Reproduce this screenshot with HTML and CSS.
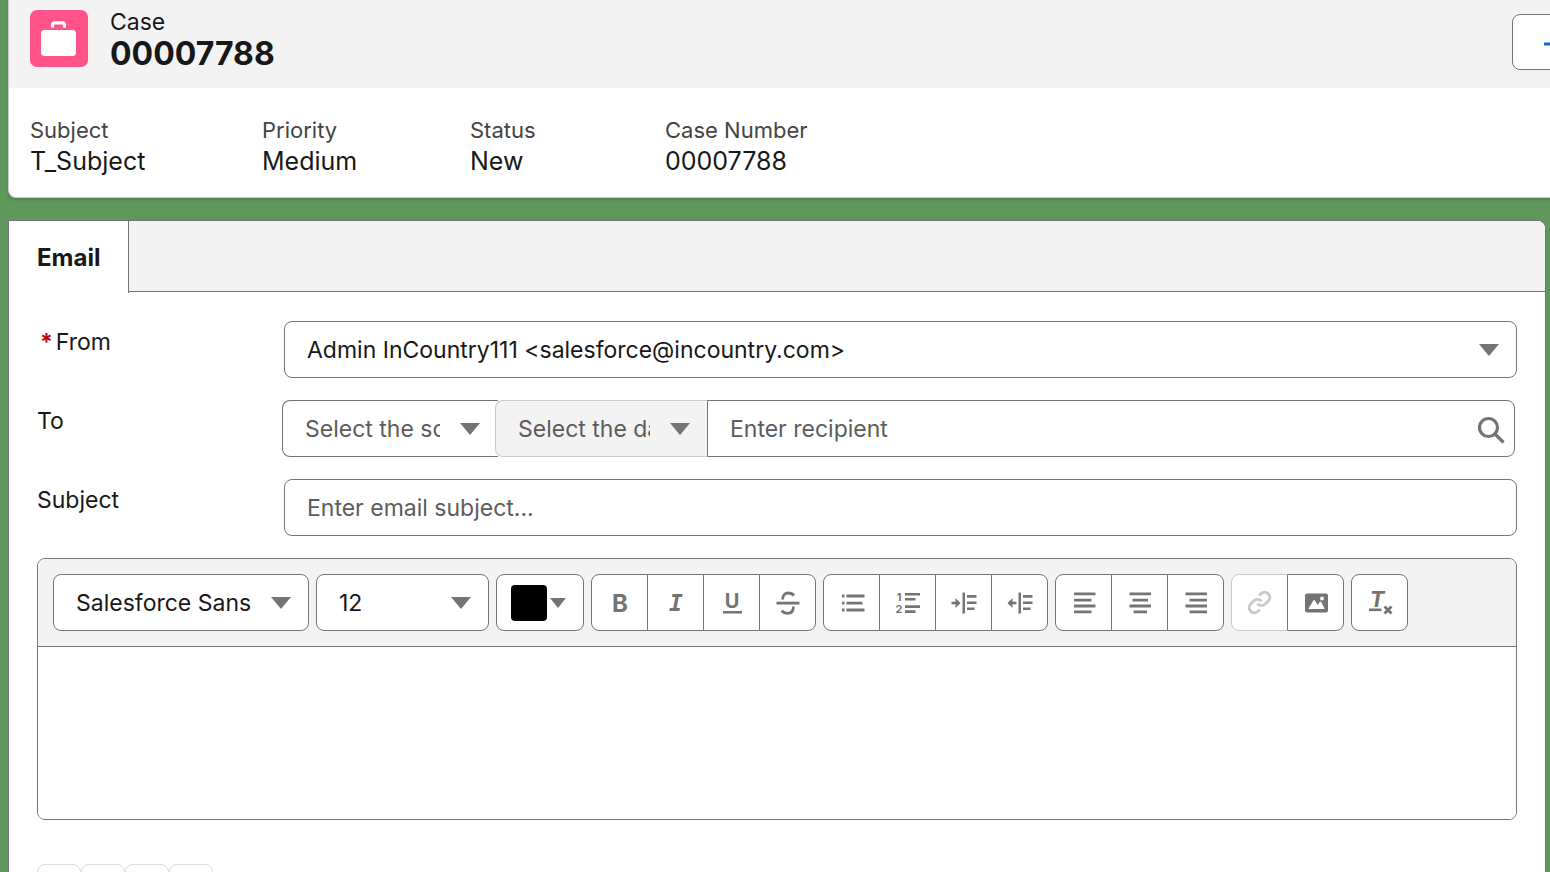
FILE: index.html
```html
<!doctype html>
<html lang="en">
  <head>
    <meta charset="UTF-8" />
    <meta name="viewport" content="width=device-width, initial-scale=1.0" />
    <title>Case 00007788</title>
    <link rel="stylesheet" href="styles.css">
  </head>
  <body>
    <header class="case-card">
      <div class="case-header">
        <svg class="case-icon" viewBox="0 0 58 58" aria-hidden="true">
          <rect width="58" height="57" rx="7" fill="#ff538a" />
          <path d="M22.500 16.500v-1.500q0-2.200 2.200-2.200h7.600q2.200 0 2.200 2.200v1.500" fill="none" stroke="#fff" stroke-width="3.200" stroke-linecap="round" />
          <rect x="11" y="20" width="35" height="26" rx="3.5" fill="#fff" />
        </svg>
        <div class="case-title">
          <p>Case</p>
          <h1>00007788</h1>
        </div>
        <button class="follow-button" type="button" aria-label="Follow">
          <svg viewBox="0 0 20 20"><path d="M0 10h20M10 0v20" stroke="#0b70cc" stroke-width="3" /></svg>
        </button>
      </div>
      <dl class="case-fields">
        <div><dt>Subject</dt><dd>T_Subject</dd></div>
        <div><dt>Priority</dt><dd>Medium</dd></div>
        <div><dt>Status</dt><dd>New</dd></div>
        <div><dt>Case Number</dt><dd>00007788</dd></div>
      </dl>
    </header>

    <main class="panel">
      <nav class="tabs">
        <a class="tab" href="#email">Email</a>
      </nav>

      <form class="email-form" id="email">
        <div class="row">
          <label class="required" for="from"><span class="star">*</span>From</label>
          <div class="select">
            <select id="from">
              <option>Admin InCountry111 &lt;salesforce@incountry.com&gt;</option>
            </select>
          </div>
        </div>

        <div class="row">
          <label for="recipient">To</label>
          <div class="recipient">
            <div class="select source">
              <select class="muted" aria-label="Source">
                <option>Select the source</option>
              </select>
            </div>
            <div class="select data">
              <select class="muted" aria-label="Data" disabled>
                <option>Select the data</option>
              </select>
            </div>
            <div class="search">
              <input id="recipient" type="text" placeholder="Enter recipient">
              <svg class="search-icon" viewBox="0 0 28 28" fill="none" stroke="#747474" stroke-width="3.200" aria-hidden="true">
                <circle cx="11.5" cy="11.5" r="9" />
                <path d="M17.5 17.5l9 9" />
              </svg>
            </div>
          </div>
        </div>

        <div class="row">
          <label for="subject">Subject</label>
          <input id="subject" type="text" placeholder="Enter email subject...">
        </div>

        <div class="editor">
          <div class="toolbar">
            <div class="select font-name">
              <select aria-label="Font">
                <option>Salesforce Sans</option>
              </select>
            </div>
            <div class="select font-size">
              <select aria-label="Font size">
                <option>12</option>
              </select>
            </div>
            <button class="color-button" type="button" aria-label="Text color">
              <span class="swatch"></span>
              <span class="caret"></span>
            </button>

            <div class="group">
              <button type="button" aria-label="Bold">
                <svg viewBox="0 0 28 28"><text class="bold" x="14" y="23">B</text></svg>
              </button>
              <button type="button" aria-label="Italic">
                <svg viewBox="0 0 28 28"><text class="italic" x="14" y="22">I</text></svg>
              </button>
              <button type="button" aria-label="Underline">
                <svg viewBox="0 0 28 28">
                  <text class="underline" x="14" y="19">U</text>
                  <rect x="5" y="22" width="19" height="2.5" />
                </svg>
              </button>
              <button type="button" aria-label="Strikethrough">
                <svg viewBox="0 0 28 28">
                  <rect x="2.5" y="12.7" width="23" height="2.8" />
                  <path class="line" d="M8.6 10.6C8.6 6.500 11 4 14.200 4c2.300 0 4.400.9 5.800 2.500M19.400 17.500c0 4.500-2.400 6.800-5.600 6.800-2.300 0-4.600-.9-6-2.700" />
                </svg>
              </button>
            </div>

            <div class="group">
              <button type="button" aria-label="Bulleted list">
                <svg viewBox="0 0 28 28">
                  <path d="M4 5.500h2.500v3H4zM4 12.800h2.500v2.800H4zM4 19.500h2.500v3H4zM8.500 5.500h18v3h-18zM8.500 12.800h16v2.800h-16zM8.500 19.500h18v3h-18z" />
                </svg>
              </button>
              <button type="button" aria-label="Numbered list">
                <svg viewBox="0 0 28 28">
                  <text class="number" x="5" y="12">1</text>
                  <text class="number" x="5" y="24">2</text>
                  <path d="M11 4h15v2.600H11zM11 9h10.500v2.600H11zM11 16.200h15v2.700H11zM11 21.300h10.500v2.700H11z" />
                </svg>
              </button>
              <button type="button" aria-label="Indent">
                <svg viewBox="0 0 28 28">
                  <path d="M12.500 3.500H15v21h-2.500zM17 6h9.500v2.800H17zM17 12.500h9.500v2.600H17zM17 18.500h7.500v2.600H17zM1.500 12.700H5.500V9l5 5-5 5v-3.700H1.500z" />
                </svg>
              </button>
              <button type="button" aria-label="Outdent">
                <svg viewBox="0 0 28 28">
                  <path d="M12.500 3.500H15v21h-2.500zM17 6h9.500v2.800H17zM17 12.500h9.500v2.600H17zM17 18.500h7.500v2.600H17zM10.500 12.700H6.500V9l-5 5 5 5v-3.700h4z" />
                </svg>
              </button>
            </div>

            <div class="group">
              <button type="button" aria-label="Left align">
                <svg viewBox="0 0 28 28">
                  <path d="M4 3.500h21.500v2.800H4zM4 9.800h17.500v2.800H4zM4 15.600h21.500v2.800H4zM4 21.500h17.500v2.800H4z" />
                </svg>
              </button>
              <button type="button" aria-label="Center align">
                <svg viewBox="0 0 28 28">
                  <path d="M3.500 3.500h21.500v2.800h-21.500zM6.500 9.800h15.500v2.800h-15.500zM3.500 15.600h21.500v2.800h-21.500zM7.500 21.500h13.500v2.800h-13.500z" />
                </svg>
              </button>
              <button type="button" aria-label="Right align">
                <svg viewBox="0 0 28 28">
                  <path d="M3.500 3.500h21.500v2.800h-21.500zM7.500 9.800h17.500v2.800h-17.500zM3.500 15.600h21.500v2.800h-21.500zM7.500 21.500h17.500v2.800h-17.500z" />
                </svg>
              </button>
            </div>

            <div class="group">
              <button type="button" aria-label="Link" disabled>
                <svg viewBox="-1 -1 27 27">
                  <path class="line" d="M10 13a5 5 0 0 0 7.540.540l3-3a5 5 0 0 0-7.070-7.070l-1.720 1.710M14 11a5 5 0 0 0-7.540-.540l-3 3a5 5 0 0 0 7.070 7.070l1.710-1.710" />
                </svg>
              </button>
              <button type="button" aria-label="Image">
                <svg viewBox="0 0 28 28">
                  <rect x="3" y="4.500" width="23" height="19" rx="2" />
                  <path d="M6.300 20l5-8.500q.8-1 1.600 0l2.800 4.500 2-3q.8-.9 1.500 0l3.500 7z" fill="#fff" />
                  <circle cx="20" cy="9.500" r="1.900" fill="#fff" />
                </svg>
              </button>
            </div>

            <div class="group">
              <button type="button" aria-label="Remove formatting">
                <svg viewBox="0 0 28 28">
                  <text class="clear" x="11" y="18">T</text>
                  <rect x="3" y="19.500" width="12.500" height="2.600" />
                  <path class="line" d="M18.500 17.500l7 7M25.500 17.500l-7 7" />
                </svg>
              </button>
            </div>
          </div>
          <textarea aria-label="Email body"></textarea>
        </div>

        <div class="actions">
          <button type="button" aria-label="Attach file"></button>
          <button type="button" aria-label="Insert merge field"></button>
          <button type="button" aria-label="Insert template"></button>
          <button type="button" aria-label="Preview"></button>
        </div>
      </form>
    </main>
  </body>
</html>
```
FILE: styles.css
```css
* {
  margin: 0;
  padding: 0;
  box-sizing: border-box;
}
body {
  height: 100vh;
  overflow: hidden;
  background-color: #60975b;
  color: #181818;
  font-family: "Inter", sans-serif;
  font-size: 23px;
  line-height: 30px;
}
button,
input,
select,
textarea {
  font: inherit;
  color: inherit;
}

/* Case summary, runs past the right edge */
.case-card {
  margin: 0 -120px 0 8px;
  border: 1px solid #c9c9c9;
  border-top: none;
  border-radius: 0 0 8px 8px;
  background-color: #fff;
  box-shadow: 0 2px 3px rgba(0, 0, 0, 0.15);
  overflow: hidden;
}
.case-header {
  display: flex;
  align-items: flex-start;
  height: 88px;
  padding: 10px 21px;
  background-color: #f3f3f3;
}
.case-icon {
  width: 58px;
  height: 58px;
}
.case-title {
  flex: 1;
  margin-left: 22px;
}
.case-title p {
  line-height: 24px;
}
.case-title h1 {
  font-size: 32px;
  line-height: 40px;
}
.follow-button {
  display: flex;
  align-items: center;
  width: 136px;
  height: 56px;
  margin-top: 4px;
  padding: 4px 31px 0;
  border: 1px solid #747474;
  border-radius: 8px;
  background-color: #fff;
}
.follow-button svg {
  width: 20px;
  height: 20px;
}
.case-fields {
  display: grid;
  grid-template-columns: 232px 208px 195px auto;
  padding: 27px 21px 20px;
}
.case-fields dt {
  color: #444;
  font-size: 22px;
}
.case-fields dd {
  font-size: 25px;
  line-height: 32px;
}

/* Email composer */
.panel {
  margin: 22px 4px 0 8px;
  border: 1px solid #747474;
  border-radius: 0 8px 0 0;
  background-color: #fff;
}
.tabs {
  display: flex;
  height: 71px;
  border-bottom: 1px solid #747474;
  border-radius: 0 8px 0 0;
  background-color: #f3f3f3;
}
.tab {
  height: 72px;
  padding: 22px 28px 20px;
  border-right: 1px solid #747474;
  background-color: #fff;
  color: #181818;
  font-size: 24px;
  font-weight: 700;
  text-decoration: none;
}
.email-form {
  padding: 29px 28px;
}
.row {
  display: flex;
  margin-bottom: 22px;
}
.row > label {
  width: 247px;
  padding-top: 6px;
  flex-shrink: 0;
}
.row > .required {
  padding-left: 3px;
}
.star {
  margin-right: 3px;
  color: #ba0517;
  font-weight: 700;
}
.row > input,
.row > .select {
  flex: 1;
}
input,
select {
  display: block;
  width: 100%;
  height: 57px;
  padding: 1px 22px 0;
  border: 1px solid #747474;
  border-radius: 8px;
  background-color: #fff;
  outline: none;
}
input::placeholder {
  color: #5c5c5c;
  opacity: 1;
}
.select {
  position: relative;
}
select {
  padding-right: 48px;
  appearance: none;
}
select.muted {
  padding-right: 58px;
  color: #5c5c5c;
  opacity: 1;
}
.select::after {
  content: "";
  position: absolute;
  top: 23px;
  right: 18px;
  border: 10px solid transparent;
  border-top: 12px solid #747474;
  border-bottom: none;
  pointer-events: none;
}
.recipient {
  display: flex;
  flex: 1;
  margin: 0 2px 0 -2px;
}
.source {
  width: 216px;
}
.source select {
  border-right: none;
  border-radius: 8px 0 0 8px;
}
.data {
  width: 213px;
  margin-left: -3px;
}
.data select {
  border-color: #c9c9c9;
  border-right: none;
  border-radius: 8px 0 0 8px;
  background-color: #f3f3f3;
}
.search {
  position: relative;
  flex: 1;
  margin-left: -1px;
}
.search input {
  border-radius: 0 8px 8px 0;
}
.search-icon {
  position: absolute;
  top: 16px;
  right: 10px;
  width: 28px;
  height: 28px;
}

/* Rich text editor */
.editor {
  border: 1px solid #747474;
  border-radius: 8px;
  overflow: hidden;
}
.toolbar {
  display: flex;
  flex-wrap: wrap;
  gap: 7px;
  padding: 15px;
  border-bottom: 1px solid #747474;
  background-color: #f3f3f3;
}
.font-name {
  width: 256px;
}
.font-size {
  width: 173px;
}
.toolbar button {
  display: flex;
  align-items: center;
  justify-content: center;
  width: 57px;
  height: 57px;
  border: 1px solid #747474;
  background-color: #fff;
}
.toolbar .color-button {
  gap: 3px;
  width: 88px;
  padding-right: 4px;
  border-radius: 8px;
}
.swatch {
  width: 36px;
  height: 36px;
  border-radius: 4px;
  background-color: #000;
}
.caret {
  border: 8px solid transparent;
  border-top: 10px solid #747474;
  border-bottom: none;
}
.group {
  display: flex;
}
.group button + button {
  margin-left: -1px;
}
.group button:first-child {
  border-top-left-radius: 8px;
  border-bottom-left-radius: 8px;
}
.group button:last-child {
  border-top-right-radius: 8px;
  border-bottom-right-radius: 8px;
}
.group button:disabled {
  border-color: #c9c9c9;
}
.group svg {
  width: 28px;
  height: 28px;
  fill: #747474;
  overflow: visible;
}
.group .line {
  fill: none;
  stroke: #747474;
  stroke-width: 2.8;
}
.group button:disabled .line {
  stroke: #c9c9c9;
}
.group text {
  font-weight: 700;
  text-anchor: middle;
}
.bold {
  font-size: 24px;
}
.italic {
  font-family: "DejaVu Sans Mono", monospace;
  font-size: 23px;
  font-style: italic;
}
.underline {
  font-size: 20px;
}
.number {
  font-size: 11px;
}
.clear {
  font-size: 22px;
  font-style: italic;
}
textarea {
  display: block;
  width: 100%;
  height: 172px;
  padding: 16px;
  border: none;
  outline: none;
  resize: none;
}
.actions {
  display: flex;
  margin-top: 44px;
}
.actions button {
  width: 44px;
  height: 44px;
  border: 1px solid #ddd;
  border-radius: 8px;
  background-color: #fff;
}
```
